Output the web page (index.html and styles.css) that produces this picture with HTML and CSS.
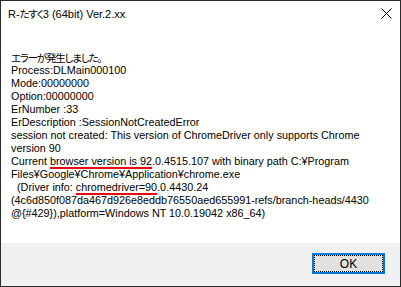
FILE: index.html
```html
<!DOCTYPE html>
<html lang="ja">
<head>
    <meta charset="UTF-8">
    <title>R-たすく3 (64bit) Ver.2.xx</title>
    <link rel="stylesheet" href="styles.css">
</head>
<body>

    <div class="window">
        <!-- Title bar -->
        <div class="titlebar">
            <span class="title">R-<span class="ja">たすく</span>3 (64bit) Ver.2.xx</span>
            <span class="close">
                <svg width="11" height="11" viewBox="0 0 11 11">
                    <path d="M0.5 0.5 L10.5 10.5 M10.5 0.5 L0.5 10.5" stroke="#000" stroke-width="1" fill="none"/>
                </svg>
            </span>
        </div>

        <!-- Message -->
        <div class="message">
            <div class="line ja">エラーが発生しました。</div>
            <div class="line">Process:DLMain000100</div>
            <div class="line">Mode:00000000</div>
            <div class="line">Option:00000000</div>
            <div class="line">ErNumber :33</div>
            <div class="line">ErDescription :SessionNotCreatedError</div>
            <div class="line">session not created: This version of ChromeDriver only supports Chrome</div>
            <div class="line">version 90</div>
            <div class="line">Current <span class="mark">browser version is 92</span>.0.4515.107 with binary path C:¥Program</div>
            <div class="line">Files¥Google¥Chrome¥Application¥chrome.exe</div>
            <div class="line">  (Driver info: <span class="mark">chromedriver=90</span>.0.4430.24</div>
            <div class="line">(4c6d850f087da467d926e8eddb76550aed655991-refs/branch-heads/4430</div>
            <div class="line">@{#429}),platform=Windows NT 10.0.19042 x86_64)</div>
        </div>

        <!-- Buttons -->
        <div class="footer">
            <button class="ok" type="button">OK</button>
        </div>
    </div>

</body>
</html>
```

FILE: styles.css
```css
body {
    margin: 0;
    background: #fff;
    font-family: "Liberation Sans", "Noto Sans CJK JP", sans-serif;
    font-size: 10.8px;
    color: #000;
}

.ja {
    font-family: "Noto Sans CJK JP", sans-serif;
    font-size: 10.5px;
    letter-spacing: -1.2px;
    font-feature-settings: "palt";
}

.window {
    width: 401px;
    height: 287px;
    box-sizing: border-box;
    border: 1px solid #2b2b2b;
    display: flex;
    flex-direction: column;
    background: #fff;
}

.titlebar {
    height: 24px;
    display: flex;
    justify-content: space-between;
    align-items: center;
    padding-left: 7px;
    padding-right: 8px;
    font-size: 11px;
}

.close {
    display: flex;
}

.message {
    flex: 1;
    padding: 26px 0 0 10px;
}

.line {
    height: 13px;
    line-height: 13px;
    white-space: pre;
}

.mark {
    text-decoration: underline;
    text-decoration-color: #e60012;
    text-decoration-thickness: 2px;
    text-underline-offset: 2px;
}

.footer {
    background: #f0f0f0;
    height: 43px;
    box-sizing: border-box;
    padding: 10px 15px 0 0;
    display: flex;
    justify-content: flex-end;
    align-items: flex-start;
}

.ok {
    width: 73px;
    height: 21px;
    padding: 0;
    border: 2px solid #0078d7;
    background: #e1e1e1;
    outline: 1px dotted #000;
    outline-offset: -3px;
    font-family: "Liberation Sans", sans-serif;
    font-size: 12px;
    color: #000;
}
```
